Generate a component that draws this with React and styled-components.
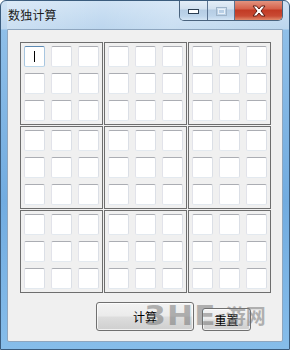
import React from "react";
import styled, { createGlobalStyle } from "styled-components";

const GlobalStyle = createGlobalStyle`
  html, body {
    margin: 0;
    padding: 0;
    background: #ffffff;
    font-family: "Noto Sans CJK SC", "Noto Sans", sans-serif;
  }
`;

const Window = styled.div`
  width: 290px;
  height: 350px;
  box-sizing: border-box;
  border: 1px solid #3b5c7d;
  border-radius: 6px 6px 0 0;
  padding: 0 6px 7px;
  display: flex;
  flex-direction: column;
  background: linear-gradient(
    to bottom,
    #cfe2f4 0px,
    #bcd6ee 28px,
    #8fbfe8 29px,
    #72ace0 200px,
    #86bdea 100%
  );
  overflow: hidden;
  position: relative;
`;

const TitleBar = styled.div`
  height: 28px;
  display: flex;
  justify-content: space-between;
  align-items: flex-start;
  flex-shrink: 0;
  background: linear-gradient(
    100deg,
    rgba(255, 255, 255, 0.25) 0%,
    rgba(255, 255, 255, 0) 35%,
    rgba(255, 255, 255, 0.2) 60%,
    rgba(255, 255, 255, 0) 100%
  );
`;

const Title = styled.div`
  margin-top: 6px;
  margin-left: 1px;
  font-size: 12px;
  line-height: 16px;
  color: #1b1b1b;
  letter-spacing: 0.2px;
`;

const CaptionGroup = styled.div`
  display: flex;
  height: 20px;
  border: 1px solid #4a637e;
  border-top: none;
  border-radius: 0 0 5px 5px;
  overflow: hidden;
  margin-top: -1px;
`;

const CaptionButton = styled.div`
  width: ${(p) => p.w}px;
  height: 20px;
  display: flex;
  align-items: center;
  justify-content: center;
  box-sizing: border-box;
  padding-top: 2px;
  border-left: ${(p) => (p.first ? "none" : "1px solid #5b7390")};
  background: ${(p) =>
    p.close
      ? "linear-gradient(to bottom, #e49a86 0%, #d5604a 45%, #c23a24 50%, #c94a33 80%, #e08a6c 100%)"
      : "linear-gradient(to bottom, #e6eff8 0%, #d2e1ef 45%, #b6cde4 50%, #bdd4ea 80%, #d4e5f4 100%)"};
`;

const Client = styled.div`
  flex: 1;
  background: #f0f0f0;
  border: 1px solid #8ea6bf;
  border-radius: 0 0 2px 2px;
  display: flex;
  flex-direction: column;
  padding: 12px 0 0 12px;
  box-sizing: border-box;
`;

const Board = styled.div`
  display: grid;
  grid-template-columns: repeat(3, 83px);
  grid-template-rows: repeat(3, 83px);
  gap: 1px;
`;

const Block = styled.div`
  box-sizing: border-box;
  border: 1px solid #6e6e6e;
  padding: 3px;
  display: grid;
  grid-template-columns: repeat(3, 21px);
  grid-template-rows: repeat(3, 21px);
  gap: 6px;
`;

const Cell = styled.div`
  box-sizing: border-box;
  background: #ffffff;
  border: 1px solid;
  border-radius: 2px;
  border-color: ${(p) =>
    p.focused
      ? "#5d8ab3 #a8c6e0 #bcd7ea #a8c6e0"
      : "#abadb3 #dbdfe6 #e3e9ef #e2e3ea"};
  display: flex;
  align-items: center;
  justify-content: center;
`;

const Caret = styled.span`
  width: 1px;
  height: 11px;
  background: #000000;
  margin-left: -1px;
`;

const ButtonRow = styled.div`
  display: flex;
  justify-content: flex-end;
  align-items: flex-end;
  gap: 8px;
  padding-right: 31px;
  margin-top: 9px;
`;

const Button = styled.div`
  width: ${(p) => p.w}px;
  height: ${(p) => p.h}px;
  box-sizing: border-box;
  border: 1px solid #707070;
  border-radius: 3px;
  background: linear-gradient(
    to bottom,
    #f3f3f3 0%,
    #ebebeb 48%,
    #dddddd 52%,
    #cfcfcf 100%
  );
  box-shadow: inset 0 0 0 1px rgba(255, 255, 255, 0.7);
  display: flex;
  align-items: center;
  justify-content: center;
  font-size: 12px;
  color: #000000;
  padding-bottom: 1px;
`;

const Watermark = styled.div`
  position: absolute;
  left: 148px;
  top: 299px;
  display: flex;
  align-items: center;
  gap: 8px;
  pointer-events: none;
  color: rgba(110, 110, 110, 0.5);
`;

const WatermarkLogo = styled.span`
  font-family: "DejaVu Sans", sans-serif;
  font-weight: bold;
  font-size: 27px;
  letter-spacing: 1px;
  transform: scaleX(1.15);
`;

const WatermarkText = styled.span`
  font-size: 20px;
  font-weight: bold;
  margin-left: 6px;
`;

function MinimizeIcon() {
  return (
    <svg width="11" height="5" viewBox="0 0 11 5">
      <rect x="0.5" y="0.5" width="10" height="4" fill="#ffffff" stroke="#2c3e52" />
    </svg>
  );
}

function MaximizeIcon() {
  return (
    <svg width="11" height="9" viewBox="0 0 11 9">
      <rect x="0.5" y="0.5" width="10" height="8" fill="none" stroke="#9fb4c9" />
      <rect x="2.5" y="2.5" width="6" height="4" fill="none" stroke="#e8f0f8" />
    </svg>
  );
}

function CloseIcon() {
  return (
    <svg width="14" height="12" viewBox="0 0 14 12">
      <path
        d="M1 1 H4.5 L7 4 L9.5 1 H13 L9 6 L13 11 H9.5 L7 8 L4.5 11 H1 L5 6 Z"
        fill="#ffffff"
        stroke="#5a1d14"
        strokeWidth="1"
        strokeLinejoin="round"
      />
    </svg>
  );
}

export default function App() {
  const blocks = Array.from({ length: 9 });
  const cells = Array.from({ length: 9 });

  return (
    <>
      <GlobalStyle />
      <Window>
        <TitleBar>
          <Title>数独计算</Title>
          <CaptionGroup>
            <CaptionButton w={27} first>
              <MinimizeIcon />
            </CaptionButton>
            <CaptionButton w={27}>
              <MaximizeIcon />
            </CaptionButton>
            <CaptionButton w={48} close>
              <CloseIcon />
            </CaptionButton>
          </CaptionGroup>
        </TitleBar>
        <Client>
          <Board>
            {blocks.map((_, b) => (
              <Block key={b}>
                {cells.map((_, c) => (
                  <Cell key={c} focused={b === 0 && c === 0}>
                    {b === 0 && c === 0 && <Caret />}
                  </Cell>
                ))}
              </Block>
            ))}
          </Board>
          <ButtonRow>
            <Button w={98} h={29}>
              计算
            </Button>
            <Button w={49} h={23}>
              重置
            </Button>
          </ButtonRow>
        </Client>
        <Watermark>
          <WatermarkLogo>3HE</WatermarkLogo>
          <WatermarkText>游网</WatermarkText>
        </Watermark>
      </Window>
    </>
  );
}
